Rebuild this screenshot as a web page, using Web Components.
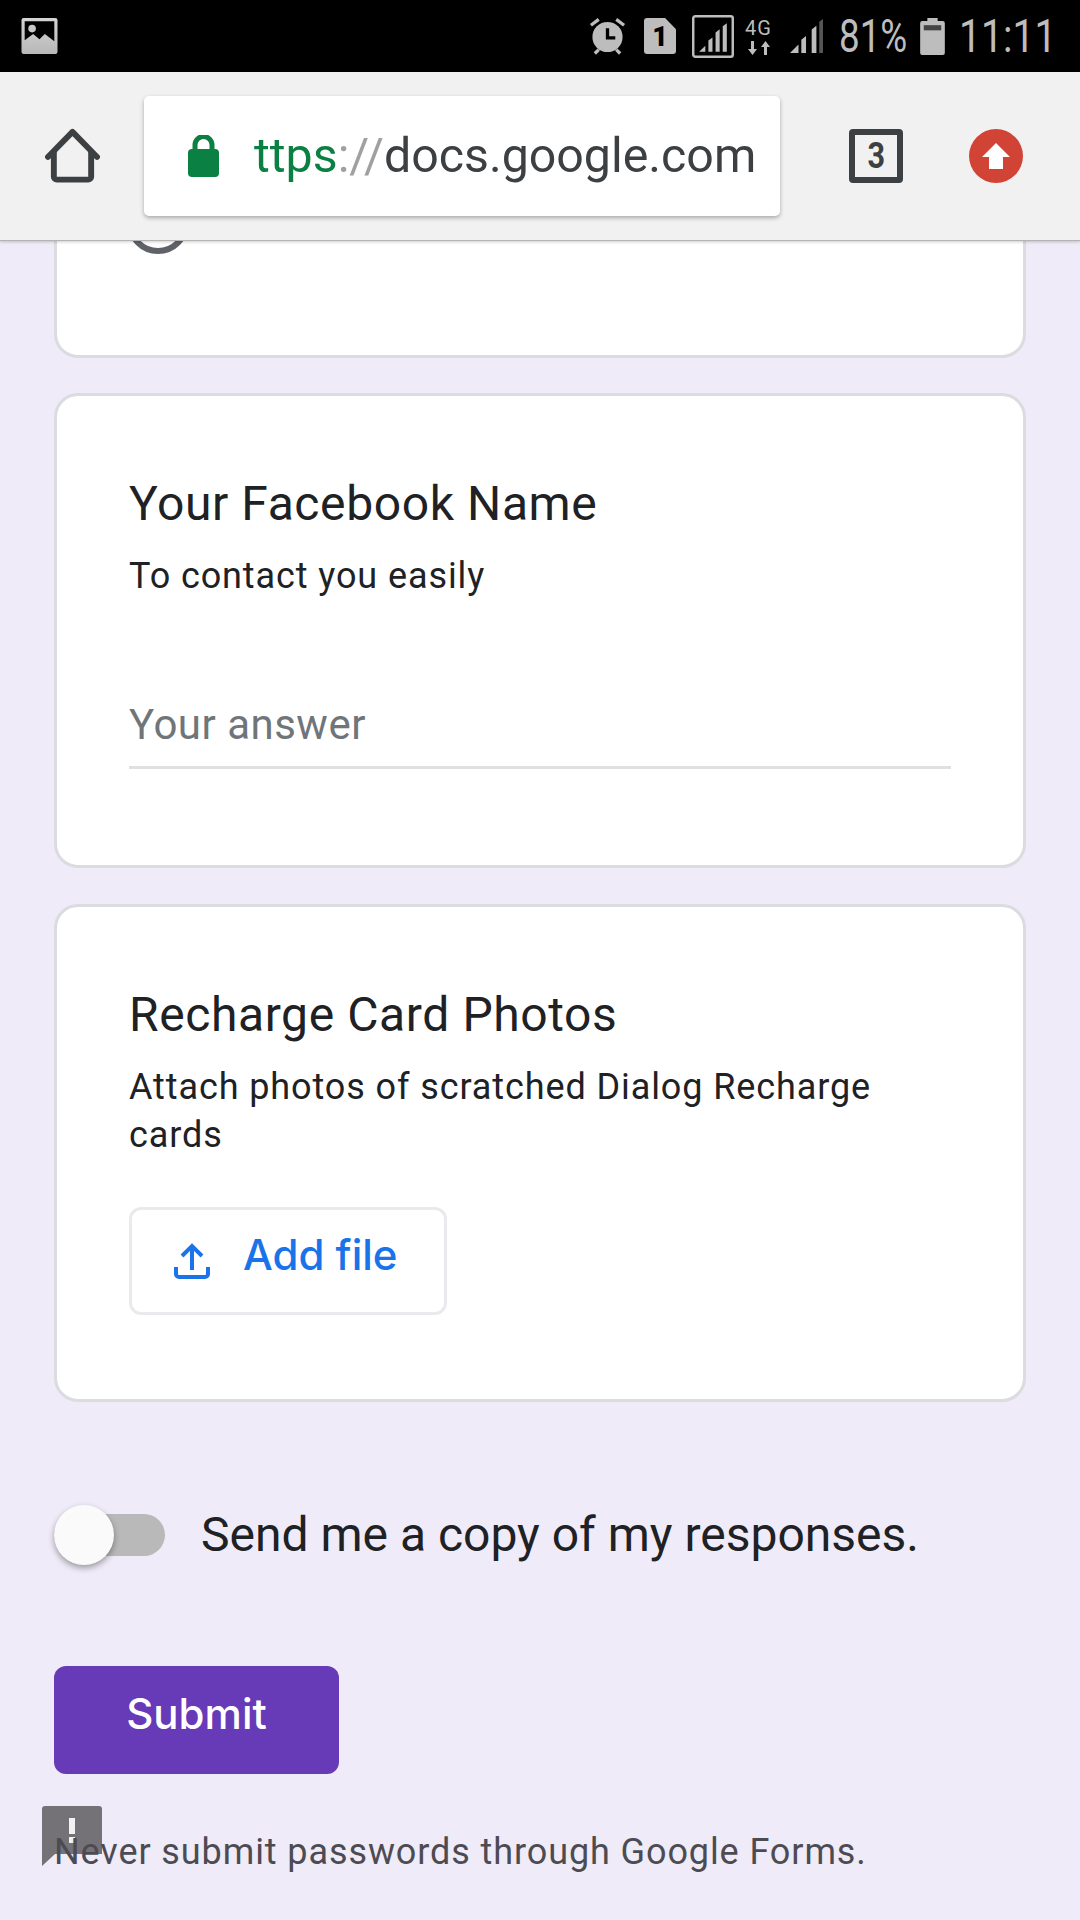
<!DOCTYPE html>
<html>
<head>
<meta charset="utf-8">
<title>Form</title>
<style>
    html, body { margin: 0; padding: 0; }
    body {
        width: 1080px;
        height: 1920px;
        overflow: hidden;
        background: #efebf8;
        font-family: Roboto, "Liberation Sans", sans-serif;
        display: flex;
        flex-direction: column;
    }
</style>
</head>
<body>
<status-bar></status-bar>
<browser-bar></browser-bar>
<form-page>
    <form-card kind="clipped"><radio-dot></radio-dot></form-card>
    <form-card title="Your Facebook Name" hint="To contact you easily" kind="text"><answer-line>Your answer</answer-line></form-card>
    <form-card title="Recharge Card Photos" hint="Attach photos of scratched Dialog Recharge cards" kind="file"><file-button>Add file</file-button></form-card>
    <copy-toggle>Send me a copy of my responses.</copy-toggle>
    <submit-button>Submit</submit-button>
    <form-note>Never submit passwords through Google Forms.</form-note>
</form-page>

<script>
class StatusBar extends HTMLElement {
    constructor() {
        super();
        this.shadowDOM = this.attachShadow({mode: 'open'});
    }

    connectedCallback() {
        this.shadowDOM.innerHTML = `
        <style>
            :host {
                display: flex;
                align-items: center;
                flex: none;
                height: 72px;
                background: #000;
                color: #bdbdbd;
                padding: 0 27px 0 21px;
                box-sizing: border-box;
            }
            svg { display: block; flex: none; }
            .fill { flex: 1; }
            .txt {
                font: 400 46px/72px Roboto, sans-serif;
                display: block;
                flex: none;
                transform-origin: left center;
                white-space: nowrap;
            }
            .pct { width: 70px; margin-left: 16px; transform: scaleX(.8); }
            .time { width: 94px; margin-left: 14px; transform: scaleX(.85); }
            .net {
                flex: none;
                width: 31px;
                margin-right: 16px;
                display: flex;
                flex-direction: column;
                align-items: center;
                gap: 3px;
                font: 400 20px/20px Roboto, sans-serif;
                letter-spacing: 1px;
            }
            .sim {
                flex: none;
                width: 32px;
                height: 36px;
                margin-right: 16px;
                background: #bdbdbd;
                border-radius: 3px;
                clip-path: polygon(0 0, 66% 0, 100% 31%, 100% 100%, 0 100%);
                display: flex;
                align-items: center;
                justify-content: center;
                padding-top: 2px;
                box-sizing: border-box;
                font: 900 27px/1 Roboto, sans-serif;
                color: #000;
            }
        </style>
        <svg width="37" height="36" viewBox="0 0 34 34">
            <defs><linearGradient id="g" x1="0" y1="0" x2="0" y2="1"><stop offset="0" stop-color="#d4d4d4"/><stop offset="1" stop-color="#b8b8b8"/></linearGradient></defs>
            <path fill="url(#g)" fill-rule="evenodd" d="M2 0h30a2 2 0 0 1 2 2v30a2 2 0 0 1-2 2H2a2 2 0 0 1-2-2V2a2 2 0 0 1 2-2zM3 3v18l8-6 6 5 5-5 9 7V3z"/>
            <circle cx="10" cy="10" r="3.6" fill="#c8c8c8"/>
        </svg>
        <span class="fill"></span>
        <svg width="37" height="38" viewBox="0 0 38 38" style="margin-right:18px">
            <circle cx="19" cy="20" r="15.500" fill="#bdbdbd"/>
            <path d="M19 11v10h8" fill="none" stroke="#000" stroke-width="3.400"/>
            <path d="M2 8l8-6M36 8l-8-6M6 37l4-4M32 37l-4-4" stroke="#bdbdbd" stroke-width="3.400"/>
        </svg>
        <span class="sim">1</span>
        <svg width="42" height="43" viewBox="0 0 41 42" style="margin-right:9px">
            <rect x="1.200" y="1.200" width="38.600" height="39.600" rx="2" fill="none" stroke="#bdbdbd" stroke-width="2.400"/>
            <path d="M7 36l6-6v6zM16 36v-11l4-3v14zM23 36V17l4-3v22zM30 36V11l4-3v28z" fill="#bdbdbd"/>
        </svg>
        <span class="net">
            <span>4G</span>
            <svg width="24" height="14" viewBox="0 0 24 14">
                <path d="M4 0h3v8h3l-4.500 6L1 8h3zM17 14h3V6h3l-4.500-6L14 6h3z" fill="#bdbdbd"/>
            </svg>
        </span>
        <svg width="33" height="38" viewBox="0 0 35 36">
            <path d="M0 36l9-9v9zM12 36V22l5-4v18zM23 36V11l5-4v29z" fill="#bdbdbd"/>
            <path d="M31 36V3l4-3v36z" fill="#555"/>
        </svg>
        <span class="txt pct">81%</span>
        <svg width="25" height="37" viewBox="0 0 24 36" style="margin-left:11px">
            <path d="M7 0h10v3h5a2 2 0 0 1 2 2v29a2 2 0 0 1-2 2H2a2 2 0 0 1-2-2V5a2 2 0 0 1 2-2h5z" fill="#bdbdbd"/>
            <rect x="3.500" y="7" width="17" height="5" fill="#444"/>
        </svg>
        <span class="txt time">11:11</span>`;
    }
}
customElements.define('status-bar', StatusBar);

class BrowserBar extends HTMLElement {
    constructor() {
        super();
        this.shadowDOM = this.attachShadow({mode: 'open'});
    }

    connectedCallback() {
        this.shadowDOM.innerHTML = `
        <style>
            :host {
                display: flex;
                align-items: center;
                flex: none;
                height: 169px;
                box-sizing: border-box;
                background: #f1f1f1;
                border-bottom: 1px solid #b4b4b4;
                box-shadow: 0 1px 3px rgba(0,0,0,.2);
                position: relative;
                z-index: 2;
                padding-left: 45px;
            }
            svg { display: block; flex: none; }
            .url {
                width: 636px;
                height: 120px;
                margin-left: 44px;
                box-sizing: border-box;
                flex: none;
                background: #fff;
                border-radius: 5px;
                box-shadow: 0 2px 4px rgba(0,0,0,.3);
                display: flex;
                align-items: center;
                padding-left: 43px;
                font: 400 48.300px/1 Roboto, sans-serif;
                color: #3c4043;
                white-space: nowrap;
            }
            .url svg { margin-right: 34px; }
            .g { color: #0b8043; }
            .s { color: #a0a0a0; }
            .tabs {
                width: 54px;
                height: 54px;
                margin-left: 69px;
                box-sizing: border-box;
                border: 6px solid #3c4043;
                border-radius: 4px;
                display: flex;
                align-items: center;
                justify-content: center;
                font: 700 36px/1 Roboto, sans-serif;
                color: #3c4043;
            }
            .tabs span { display: block; transform: scaleX(.85); }
            .up { margin-left: 66px; }
        </style>
        <svg width="55" height="56" viewBox="0 0 56 56">
            <path d="M3 29L28 3.500 53 29" fill="none" stroke="#3c4043" stroke-width="6" stroke-linecap="round" stroke-linejoin="round"/>
            <path d="M9 24v25a3 3 0 0 0 3 3h32a3 3 0 0 0 3-3V24" fill="none" stroke="#3c4043" stroke-width="6"/>
        </svg>
        <div class="url">
            <svg width="33" height="42" viewBox="0 0 31 42">
                <path d="M7 17v-7a8.500 8.500 0 0 1 17 0v7" fill="none" stroke="#0b8043" stroke-width="5"/>
                <rect y="14" width="31" height="28" rx="4" fill="#0b8043"/>
            </svg>
            <span><span class="g">ttps</span><span class="s">://</span>docs.google.com</span>
        </div>
        <div class="tabs"><span>3</span></div>
        <svg class="up" width="54" height="54" viewBox="0 0 54 54">
            <circle cx="27" cy="27" r="27" fill="#d14334"/>
            <path d="M27 14l14 14h-7v12H20V28h-7z" fill="#fff"/>
        </svg>`;
    }
}
customElements.define('browser-bar', BrowserBar);

class FormPage extends HTMLElement {
    constructor() {
        super();
        this.attachShadow({mode: 'open'}).innerHTML = `
        <style>
            :host {
                display: flex;
                flex-direction: column;
                flex: 1;
                min-height: 0;
                overflow: hidden;
                padding: 0 54px;
                position: relative;
            }
        </style>
        <slot></slot>`;
    }
}
customElements.define('form-page', FormPage);

class FormCard extends HTMLElement {
    constructor() {
        super();
        this.shadowDOM = this.attachShadow({mode: 'open'});
    }

    connectedCallback() {
        const title = this.getAttribute('title');
        const hint = this.getAttribute('hint');
        this.removeAttribute('title');
        this.shadowDOM.innerHTML = `
        <style>
            :host {
                display: block;
                flex: none;
                box-sizing: border-box;
                background: #fff;
                border: 3px solid #dadce0;
                border-radius: 24px;
                padding: 0 72px;
            }
            :host([kind="clipped"]) { height: 217px; margin-top: -100px; margin-bottom: 35px; padding-top: 48px; }
            :host([kind="text"]) { height: 475px; margin-bottom: 36px; padding-top: 81px; }
            :host([kind="file"]) { height: 498px; padding-top: 81px; }
            h2 {
                margin: 0;
                font: 400 48px/54px Roboto, sans-serif;
                letter-spacing: .6px;
                color: #202124;
            }
            p {
                margin: 21px 0 0;
                font: 400 36px/48px Roboto, sans-serif;
                letter-spacing: .9px;
                color: #202124;
            }
        </style>
        ${title ? `<h2>${title}</h2><p>${hint}</p>` : ''}
        <slot></slot>`;
    }
}
customElements.define('form-card', FormCard);

class RadioDot extends HTMLElement {
    constructor() {
        super();
        this.attachShadow({mode: 'open'}).innerHTML = `
        <style>
            :host {
                display: block;
                width: 62px;
                height: 62px;
                margin-left: -2px;
                box-sizing: border-box;
                border: 6px solid #5f6368;
                border-radius: 50%;
            }
        </style>`;
    }
}
customElements.define('radio-dot', RadioDot);

class AnswerLine extends HTMLElement {
    constructor() {
        super();
        this.attachShadow({mode: 'open'}).innerHTML = `
        <style>
            :host {
                display: block;
                margin-top: 92px;
                height: 66px;
                padding-bottom: 8px;
                box-sizing: content-box;
                border-bottom: 3px solid #e0e0e0;
                font: 400 42px/66px Roboto, sans-serif;
                letter-spacing: .5px;
                color: #70757a;
            }
        </style>
        <slot></slot>`;
    }
}
customElements.define('answer-line', AnswerLine);

class FileButton extends HTMLElement {
    constructor() {
        super();
        this.attachShadow({mode: 'open'}).innerHTML = `
        <style>
            :host {
                display: flex;
                align-items: center;
                width: 318px;
                height: 108px;
                box-sizing: border-box;
                margin-top: 48px;
                padding: 0 0 12px 42px;
                border: 3px solid #e8eaed;
                border-radius: 12px;
                font: 500 42px/1 Inter, Roboto, sans-serif;
                color: #1a73e8;
            }
            svg { display: block; margin-right: 33px; flex: none; position: relative; top: 6px; }
        </style>
        <svg width="36" height="36" viewBox="0 0 36 36">
            <path d="M18 27V4M8 13L18 3l10 10" fill="none" stroke="#1a73e8" stroke-width="4"/>
            <path d="M2 24v7a3 3 0 0 0 3 3h26a3 3 0 0 0 3-3v-7" fill="none" stroke="#1a73e8" stroke-width="4"/>
        </svg>
        <span><slot></slot></span>`;
    }
}
customElements.define('file-button', FileButton);

class CopyToggle extends HTMLElement {
    constructor() {
        super();
        this.attachShadow({mode: 'open'}).innerHTML = `
        <style>
            :host {
                display: flex;
                align-items: center;
                margin-top: 103px;
                height: 60px;
                font: 400 48px/60px Roboto, sans-serif;
                color: #202124;
                white-space: nowrap;
            }
            .sw {
                position: relative;
                flex: none;
                width: 111px;
                height: 42px;
                margin-right: 36px;
                background: #b9b9b9;
                border-radius: 21px;
            }
            .sw::before {
                content: '';
                position: absolute;
                left: 0;
                top: -9px;
                width: 60px;
                height: 60px;
                border-radius: 50%;
                background: #fafafa;
                box-shadow: 0 3px 6px rgba(0,0,0,.35);
            }
        </style>
        <span class="sw"></span>
        <span><slot></slot></span>`;
    }
}
customElements.define('copy-toggle', CopyToggle);

class SubmitButton extends HTMLElement {
    constructor() {
        super();
        this.attachShadow({mode: 'open'}).innerHTML = `
        <style>
            :host {
                display: flex;
                align-items: center;
                justify-content: center;
                flex: none;
                width: 285px;
                height: 108px;
                box-sizing: border-box;
                padding-bottom: 12px;
                margin-top: 101px;
                background: #673ab7;
                border-radius: 12px;
                color: #fff;
                font: 500 42px/1 Inter, Roboto, sans-serif;
            }
        </style>
        <slot></slot>`;
    }
}
customElements.define('submit-button', SubmitButton);

class FormNote extends HTMLElement {
    constructor() {
        super();
        this.attachShadow({mode: 'open'}).innerHTML = `
        <style>
            :host {
                display: block;
                margin-top: 54px;
                position: relative;
                font: 400 36px/48px Roboto, sans-serif;
                letter-spacing: .9px;
                color: #4d4b52;
            }
            .flag {
                position: absolute;
                left: -12px;
                top: -22px;
                z-index: -1;
                display: block;
            }
            .wrap { position: relative; z-index: 0; display: block; }
        </style>
        <span class="wrap">
            <svg class="flag" width="60" height="60" viewBox="0 0 60 60">
                <path d="M3 0h54a3 3 0 0 1 3 3v45H13L0 60V3a3 3 0 0 1 3-3z" fill="#747276"/>
                <path d="M27 12h6v16h-6zM27 31h6v6h-6z" fill="#f2f2f2"/>
            </svg>
            <slot></slot>
        </span>`;
    }
}
customElements.define('form-note', FormNote);
</script>
</body>
</html>
